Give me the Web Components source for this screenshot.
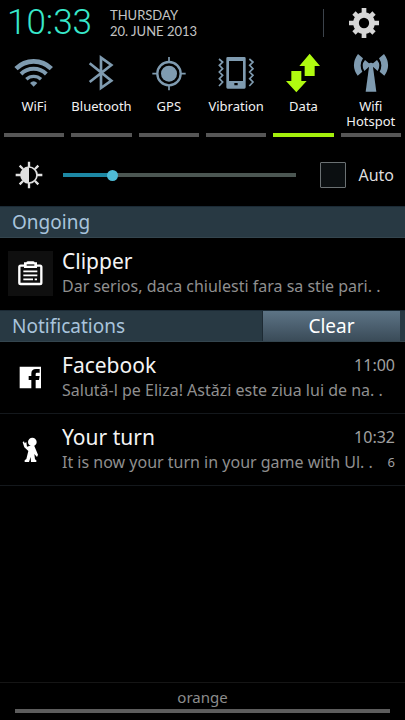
<!DOCTYPE html>
<html lang="en">
<head>
<meta charset="utf-8">
<meta name="viewport" content="width=device-width, initial-scale=1">
<title>Notification panel</title>
<style>
  html { background: #000; }
  body { margin: 0; font-family: "Noto Sans", "Open Sans", sans-serif; color: #fff; }
</style>
</head>
<body>
<notification-panel></notification-panel>

<script>
const ICONS = {
  wifi: ['42 30 120 108', `<g fill="none" stroke="currentColor" stroke-width="14"><path d="M48 71A75 75 0 0 1 154 71"/><path d="M63 87A54 54 0 0 1 139 87" stroke-width="12"/><path d="M79 103A32 32 0 0 1 123 103" stroke-width="10"/></g><path d="M101 125L90 114Q101 104 112 114Z" fill="currentColor"/>`],
  bluetooth: ['244 30 120 108', `<path d="M270 55L335 107L304 129V38L335 60L270 111" fill="none" stroke="currentColor" stroke-width="8"/>`],
  gps: ['447 30 120 108', `<g fill="none" stroke="currentColor" stroke-width="7"><circle cx="507" cy="86" r="35"/><path d="M507 36V51M507 121V136M457 86H472M542 86H557" stroke-width="5"/></g><circle cx="507" cy="86" r="24" fill="currentColor"/>`],
  vibration: ['48 30 120 108', `<path fill="currentColor" fill-rule="evenodd" d="M83 36H133Q137 36 137 40V127Q137 131 133 131H83Q79 131 79 127V40Q79 36 83 36ZM87 48V108H129V48ZM103 114V121H113V114Z"/><path d="M57 42L68 51L58 61L68 71L58 81L68 91L58 101L68 111L57 123M148 42L159 51L149 61L159 71L149 81L159 91L149 101L159 111L148 123" fill="none" stroke="currentColor" stroke-width="5"/>`],
  data: ['252 24 120 120', `<path fill="currentColor" d="M332 26L363 63H347V93H317V63H301ZM292 142L323 108H307V78H277V108H261Z"/>`],
  hotspot: ['453 24 120 120', `<g fill="currentColor"><path d="M507 66H519L529 140H497Z"/><circle cx="513" cy="61" r="8"/><path d="M513 60L495 45Q482 60 493 78ZM513 60L531 45Q544 60 533 78Z"/><path d="M474 27L489 40Q476 60 487 80L473 92Q450 60 474 27ZM552 27L537 40Q550 60 539 80L553 92Q576 60 552 27Z"/></g>`],
  gear: ['-48 -48 96 96', `<g fill="none" stroke="currentColor"><circle r="24" stroke-width="17"/><path stroke-width="14" d="M0-45V-26M0 45V26M-45 0H-26M45 0H26M-30-30L-20-20M30 30L20 20M-30 30L-20 20M30-30L20-20"/></g>`],
  brightness: ['-42 -42 84 84', `<g fill="none" stroke="currentColor" stroke-width="5"><circle r="24"/><path stroke-width="7" d="M0-40V-24M0 40V24M-40 0H-24M40 0H24M-28-28L-18-18M28 28L18 18M-28 28L-18 18M28-28L18-18"/></g><path fill="currentColor" d="M0-24A24 24 0 0 0 0 24Z"/>`],
  clipper: ['24 36 135 135', `<rect x="24" y="36" width="135" height="135" fill="#0f0f0f"/><rect x="58" y="80" width="66" height="55" rx="4" fill="none" stroke="currentColor" stroke-width="7"/><path d="M72 70H79Q80 67 84 67H99Q103 67 104 70H111V87H72Z" fill="currentColor"/><path d="M80 76H103V80H80Z" fill="#0f0f0f"/><path d="M70 97H112M70 109H112M70 121H99M104 121H111" stroke="currentColor" stroke-width="5"/>`],
  facebook: ['24 31 135 135', `<path fill="currentColor" fill-rule="evenodd" d="M59 66H123V131H107V106H117L119 94H107V88Q107 84 111 84H119V73H108Q94 73 94 87V94H86V106H94V131H59Z"/>`],
  player: ['24 246 135 135', `<g fill="currentColor"><circle cx="97" cy="291" r="13"/><path d="M68 292L72 289L74 295L79 291L81 305L88 303H103L114 329L111 336L103 327L105 343L109 346V351H93L92 336L87 351H74V346L79 342L85 318L73 307Z"/></g>`]
};

function define(name, css, html, setup) {
  const template = document.createElement('template');
  template.innerHTML = `<style>*{box-sizing:border-box}${css}</style>${html}`;
  customElements.define(name, class extends HTMLElement {
    connectedCallback() {
      if (this.shadowRoot) return;
      const root = this.attachShadow({ mode: 'open' });
      root.append(template.content.cloneNode(true));
      if (setup) setup(this, root);
    }
  });
}

define('sys-icon', `:host{display:block;flex:none} svg{display:block;width:100%;height:100%}`,
  `<svg aria-hidden="true"></svg>`, (host, root) => {
    const [box, shapes] = ICONS[host.getAttribute('name')];
    const svg = root.querySelector('svg');
    svg.setAttribute('viewBox', box);
    svg.innerHTML = shapes;
  });

function addIcon(host, parent) {
  const icon = document.createElement('sys-icon');
  icon.setAttribute('name', host.getAttribute('icon'));
  parent.prepend(icon);
}

define('status-header', `
  :host{display:flex;align-items:center;height:45px;padding:0 25px 0 7px}
  .clock{font:300 35px/44px Roboto,sans-serif;color:#38e8cb;width:103px}
  .date{font-family:Lato,sans-serif;font-size:13px;line-height:16px;color:#c4c4c4;flex:1}
  .date span{display:block}
  .rule{width:1px;height:28px;background:#3c434b;margin-right:24px}
  button{background:none;border:0;padding:0;color:#d6d6d6}
  sys-icon{width:32px;height:32px}`,
  `<time class="clock">10:33</time>
   <div class="date"><span>THURSDAY</span><span>20. JUNE 2013</span></div>
   <div class="rule"></div>
   <button aria-label="Settings"><sys-icon name="gear"></sys-icon></button>`);

define('quick-toggle', `
  :host{display:flex}
  button{flex:1;min-width:0;display:flex;flex-direction:column;align-items:center;background:none;border:0;padding:0;color:#7f9bb0;font:inherit}
  sys-icon{width:40px;height:36px}
  .label{font-size:13px;line-height:15px;height:34px;color:#f2f2f2;margin-top:8px;text-align:center}
  .bar{width:100%;height:4px;background:#565656}
  :host([active]) button{color:#b0fb10}
  :host([active]) .bar{background:#a4ef0c}
  :host([tall]) sys-icon{width:40px;height:40px;margin:-2px 0}`,
  `<button><span class="label"><slot></slot></span><span class="bar"></span></button>`,
  (host, root) => {
    const button = root.querySelector('button');
    addIcon(host, button);
    button.setAttribute('aria-pressed', host.hasAttribute('active'));
  });

define('toggle-row', `:host{display:grid;grid-template-columns:repeat(6,minmax(0,1fr));gap:7px;padding:10px 4px 0}`, `<slot></slot>`);

define('brightness-row', `
  :host{display:flex;align-items:center;box-sizing:border-box;height:69px;padding:7px 11px 0 15px}
  sys-icon{width:28px;height:28px;color:#e0e0e0}
  input[type=range]{appearance:none;flex:1;min-width:0;height:12px;margin:0 24px 0 20px;background:linear-gradient(90deg,#1d88a4 22%,#4b5652 22%) center/100% 4px no-repeat}
  input[type=range]::-webkit-slider-thumb{appearance:none;width:11px;height:11px;border-radius:50%;background:#4fbbd6}
  input[type=checkbox]{appearance:none;width:26px;height:26px;margin:0 12px 0 0;border:1px solid #6b7173;border-radius:1px;background:#0b0f11}
  label{display:flex;align-items:center;font-size:16px;line-height:24px;color:#dedede}`,
  `<sys-icon name="brightness"></sys-icon>
   <input type="range" min="0" max="100" value="20" aria-label="Brightness">
   <label><input type="checkbox">Auto</label>`);

define('section-header', `
  :host{display:block}
  header{display:flex;height:32px;background:#283943;border-top:1px solid #1b2a35;border-bottom:1px solid #34454e;padding:0 5px 0 12px}
  h2{flex:1;margin:0;font-size:19px;line-height:31px;font-weight:400;color:#a9c4dc}`,
  `<header><h2><slot></slot></h2><slot name="action"></slot></header>`);

define('clear-button', `
  :host{display:block;width:138px}
  button{display:block;width:100%;height:30px;border:0;border-left:1px solid #1d2a33;padding:0;font:inherit;font-size:19px;line-height:30px;color:#fff;background:linear-gradient(#5d7486,#3a4b58)}`,
  `<button><slot></slot></button>`);

define('notification-item', `
  :host{display:flex;box-sizing:border-box;height:72px;padding:0 10px 0 8px;align-items:center;border-bottom:1px solid #14181c}
  :host([last-in-group]){border-bottom-color:#000}
  sys-icon{width:45px;height:45px;color:#fff}
  .body{flex:1;min-width:0;margin-left:9px;padding-bottom:2px}
  .line{display:flex;justify-content:space-between;align-items:center;white-space:nowrap}
  h3{margin:0;font-size:21px;line-height:26px;font-weight:400;color:#f4f4f4}
  .meta{font-size:16px;line-height:24px;color:#a0a0a0}
  p{margin:0;font-size:16px;line-height:24px;color:#8f8f8f}
  .count{font-size:13px;line-height:24px;color:#a0a0a0}`,
  `<div class="body">
     <div class="line"><h3><slot name="title"></slot></h3><span class="meta"><slot name="time"></slot></span></div>
     <div class="line"><p><slot></slot></p><span class="count"><slot name="count"></slot></span></div>
   </div>`, (host, root) => addIcon(host, root));

define('carrier-footer', `
  :host{display:block;border-top:1px solid #151515;padding:2px 15px 7px}
  .name{font-size:15px;line-height:24px;text-align:center;color:#8c8c8c}
  .handle{height:4px;background:#5c5c5c}`,
  `<div class="name"><slot></slot></div><div class="handle"></div>`);

define('notification-panel', `
  :host{display:flex;flex-direction:column;min-height:100vh;background:#000}
  carrier-footer{margin-top:auto}`,
  `<status-header></status-header>
   <toggle-row>
     <quick-toggle icon="wifi">WiFi</quick-toggle>
     <quick-toggle icon="bluetooth">Bluetooth</quick-toggle>
     <quick-toggle icon="gps">GPS</quick-toggle>
     <quick-toggle icon="vibration">Vibration</quick-toggle>
     <quick-toggle icon="data" active tall>Data</quick-toggle>
     <quick-toggle icon="hotspot" tall>Wifi Hotspot</quick-toggle>
   </toggle-row>
   <brightness-row></brightness-row>
   <section-header>Ongoing</section-header>
   <notification-item icon="clipper" last-in-group><span slot="title">Clipper</span>Dar serios, daca chiulesti fara sa stie pari. .</notification-item>
   <section-header>Notifications<clear-button slot="action">Clear</clear-button></section-header>
   <notification-item icon="facebook"><span slot="title">Facebook</span><span slot="time">11:00</span>Salută-l pe Eliza! Astăzi este ziua lui de na. .</notification-item>
   <notification-item icon="player"><span slot="title">Your turn</span><span slot="time">10:32</span>It is now your turn in your game with Ul. .<span slot="count">6</span></notification-item>
   <carrier-footer>orange</carrier-footer>`);
</script>
</body>
</html>
